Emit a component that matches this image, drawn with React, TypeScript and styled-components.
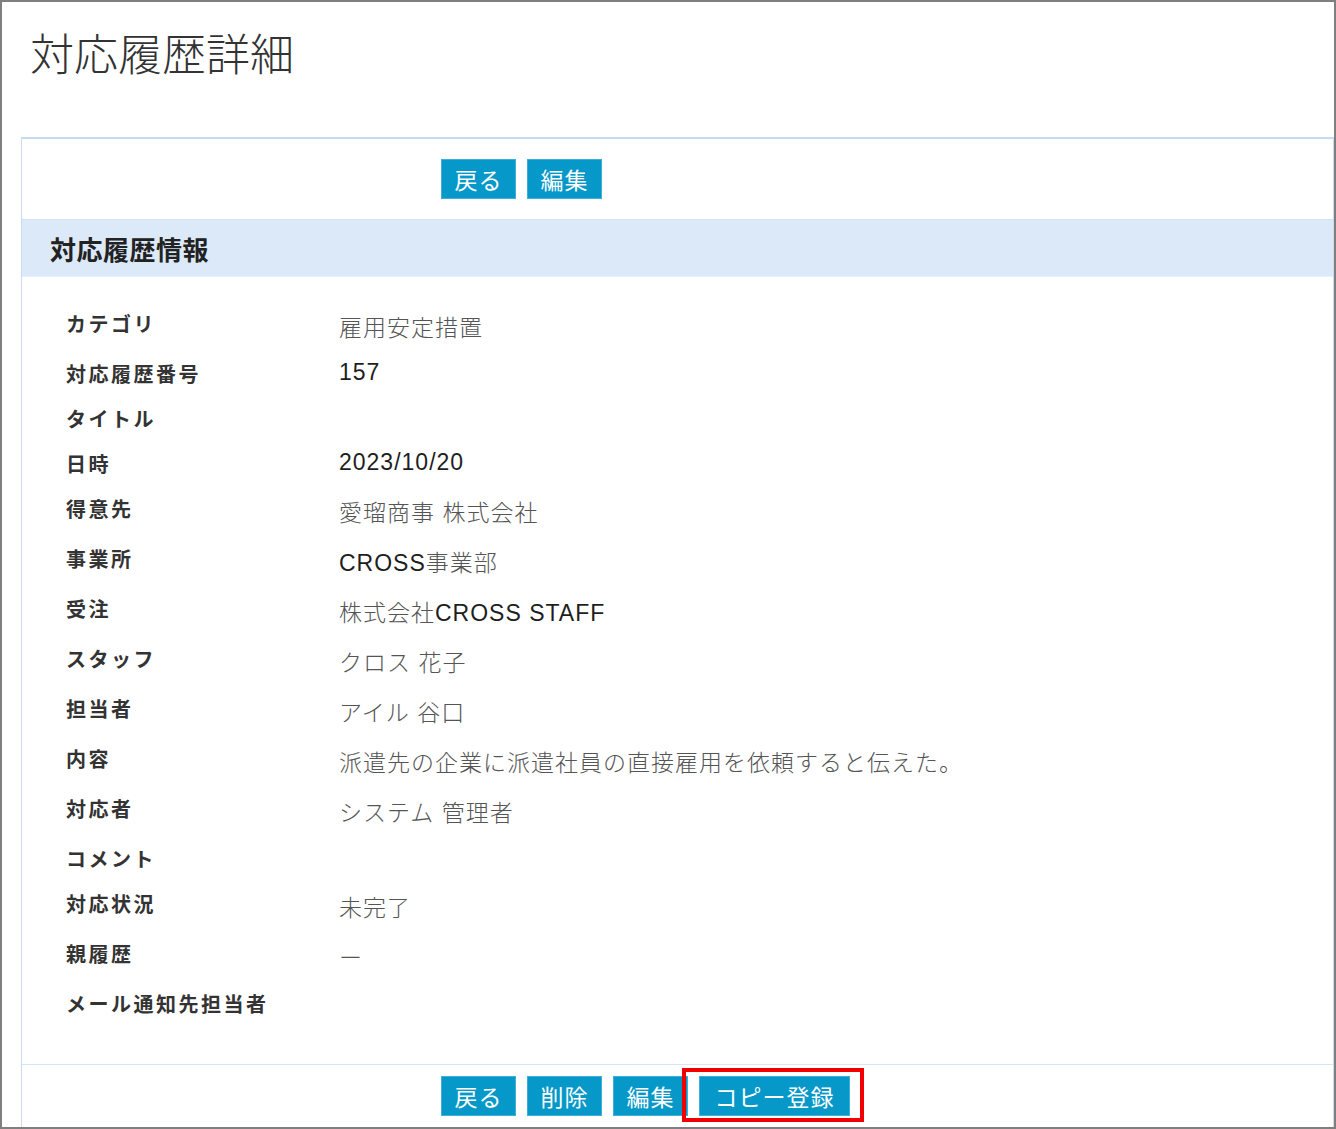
import React from "react";
import styled, { createGlobalStyle } from "styled-components";

const Global = createGlobalStyle`
  html, body { margin: 0; padding: 0; background: #fff; }
  body { font-family: "Noto Sans CJK JP", "Noto Sans", sans-serif; }
`;

const Frame = styled.div`
  width: 1336px;
  height: 1129px;
  box-sizing: border-box;
  border: 2px solid #7f7f7f;
  overflow: hidden;
  display: flex;
  flex-direction: column;
  background: #fff;
`;

const PageTitle = styled.h1`
  margin: 0;
  height: 135px;
  flex-shrink: 0;
  box-sizing: border-box;
  padding: 24px 0 0 28px;
  font-size: 44px;
  line-height: 52px;
  font-weight: 300;
  color: #333;
`;

const Panel = styled.section`
  flex: 1;
  margin-left: 19px;
  border-top: 2px solid #c3daf0;
  border-left: 1px solid #c8ddf2;
  border-right: 1px solid #c8ddf2;
  display: flex;
  flex-direction: column;
`;

const Toolbar = styled.div<{ $top?: boolean }>`
  display: flex;
  gap: 11px;
  padding: ${(p) => (p.$top ? "20px 0 20px 419px" : "11px 0 11px 419px")};
  ${(p) =>
    p.$top
      ? "border-bottom: 1px solid #d0e2f4;"
      : "border-top: 1px solid #d6e5f5;"}
`;

const Button = styled.button<{ $wide?: boolean }>`
  width: ${(p) => (p.$wide ? "151px" : "75px")};
  height: 40px;
  box-sizing: border-box;
  border: 1px solid #3eafd9;
  background: #0598c8;
  color: #fff;
  font-family: "Noto Sans CJK JP", sans-serif;
  font-size: 23px;
  font-weight: 400;
  letter-spacing: 1px;
  padding: 0;
  cursor: pointer;
  line-height: 1;
`;

const Marked = styled.span`
  position: relative;
  display: inline-flex;
`;

const RedBox = styled.span`
  position: absolute;
  top: -8px;
  bottom: -6px;
  left: -17px;
  right: -14px;
  border: 4px solid #f00000;
  pointer-events: none;
`;

const SectionHeader = styled.h2`
  margin: 0;
  height: 57px;
  box-sizing: border-box;
  background: #dce9f8;
  border-bottom: 1px solid #e8f0fa;
  padding-left: 28px;
  display: flex;
  align-items: center;
  font-size: 26px;
  font-weight: 700;
  color: #222;
  letter-spacing: 0.5px;
`;

const List = styled.dl`
  margin: 0;
  padding: 24px 0 38px 44px;
  display: flex;
  flex-direction: column;
`;

const Row = styled.div`
  display: grid;
  grid-template-columns: 273px 1fr;
  align-items: start;
  padding: 8px 0 8px;
`;

const Label = styled.dt`
  font-size: 20px;
  line-height: 29px;
  font-weight: 700;
  color: #333;
  letter-spacing: 2.5px;
`;

const Value = styled.dd`
  margin: 0;
  font-family: "Liberation Sans", "Noto Sans CJK JP", sans-serif;
  font-size: 23px;
  font-weight: 300;
  color: #555;
  letter-spacing: 1px;
`;

const Latin = styled.span`
  color: #1e1e1e;
  font-weight: 400;
`;

const rows: [string, string][] = [
  ["カテゴリ", "雇用安定措置"],
  ["対応履歴番号", "157"],
  ["タイトル", ""],
  ["日時", "2023/10/20"],
  ["得意先", "愛瑠商事 株式会社"],
  ["事業所", "CROSS事業部"],
  ["受注", "株式会社CROSS STAFF"],
  ["スタッフ", "クロス 花子"],
  ["担当者", "アイル 谷口"],
  ["内容", "派遣先の企業に派遣社員の直接雇用を依頼すると伝えた。"],
  ["対応者", "システム 管理者"],
  ["コメント", ""],
  ["対応状況", "未完了"],
  ["親履歴", "ー"],
  ["メール通知先担当者", ""],
];

function renderValue(v: string) {
  const parts = v.split(/([A-Za-z0-9/]+(?: [A-Za-z0-9/]+)*)/);
  return parts.map((p, i) =>
    i % 2 === 1 ? <Latin key={i}>{p}</Latin> : p
  );
}

export default function App() {
  return (
    <>
      <Global />
      <Frame>
        <PageTitle>対応履歴詳細</PageTitle>
        <Panel>
          <Toolbar $top>
            <Button>戻る</Button>
            <Button>編集</Button>
          </Toolbar>
          <SectionHeader>対応履歴情報</SectionHeader>
          <List>
            {rows.map(([k, v]) => (
              <Row key={k}>
                <Label>{k}</Label>
                <Value>{renderValue(v)}</Value>
              </Row>
            ))}
          </List>
          <Toolbar>
            <Button>戻る</Button>
            <Button>削除</Button>
            <Button>編集</Button>
            <Marked>
              <Button $wide>コピー登録</Button>
              <RedBox />
            </Marked>
          </Toolbar>
        </Panel>
      </Frame>
    </>
  );
}
